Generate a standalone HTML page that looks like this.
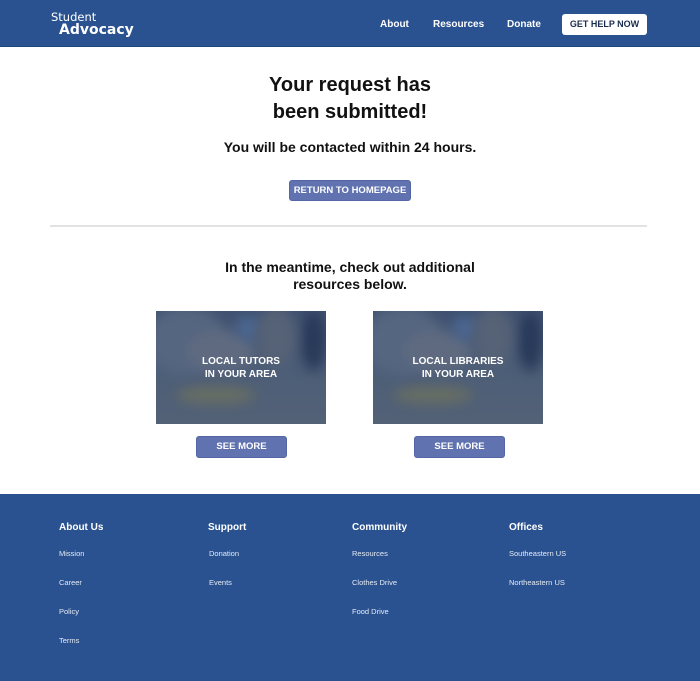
<!DOCTYPE html>
<html><head><meta charset="utf-8"><style>
*{margin:0;padding:0;box-sizing:border-box}
body{width:700px;height:681px;position:relative;background:#fff;font-family:"Liberation Sans",Arial,sans-serif;overflow:hidden}
.a{position:absolute}
.hdr{left:0;top:0;width:700px;height:47px;background:#2a5290;border-bottom:1px solid #21457d}
.nav{color:#fff;font-size:10px;font-weight:bold;top:19px}
.c{text-align:center;width:700px;left:0;color:#111;font-weight:bold}
.btn{background:#6072b0;color:#fff;font-weight:bold;font-size:9.5px;text-align:center;border-radius:3px;border:1px solid #5466a5}
.img{width:170px;height:113px;overflow:hidden;background:linear-gradient(180deg,#4c5f7e 0%,#5f7088 45%,#6a7886 100%)}
.img .b{position:absolute;filter:blur(6px);border-radius:50%}
.img .o{position:absolute;left:0;top:0;width:100%;height:100%;background:rgba(40,58,90,0.35)}
.img .t{position:absolute;left:0;width:100%;top:44px;text-align:center;color:#fff;font-weight:bold;font-size:10px;line-height:13px}
.ft{left:0;top:494px;width:700px;height:187px;background:#2a5290}
.fh{color:#fff;font-weight:bold;font-size:10px;top:522px}
.fl{color:#e6ebf4;font-size:7.5px}
</style></head><body>
<div class="a hdr"></div>
<div class="a" style="left:51px;top:11px;color:#fff;font-family:'DejaVu Sans',sans-serif;font-size:11.5px;line-height:13px">Student</div>
<div class="a" style="left:59px;top:22px;color:#fff;font-family:'DejaVu Sans',sans-serif;font-weight:bold;font-size:14px;line-height:16px">Advocacy</div>
<div class="a nav" style="left:380px">About</div>
<div class="a nav" style="left:433px">Resources</div>
<div class="a nav" style="left:507px">Donate</div>
<div class="a" style="left:562px;top:14px;width:85px;height:21px;background:#fff;border-radius:3px;color:#1c2d4f;font-size:9px;font-weight:bold;text-align:center;line-height:21px">GET HELP NOW</div>

<div class="a c" style="top:72px;font-size:20px;line-height:27px">Your request has<br>been submitted!</div>
<div class="a c" style="top:139px;font-size:14px">You will be contacted within 24 hours.</div>
<div class="a btn" style="left:289px;top:180px;width:122px;height:21px;line-height:19px">RETURN TO HOMEPAGE</div>
<div class="a" style="left:50px;top:225px;width:597px;height:2px;background:#e2e2e2"></div>
<div class="a c" style="top:259px;font-size:14px;line-height:17px">In the meantime, check out additional<br>resources below.</div>

<div class="a img" style="left:156px;top:311px">
<div class="b" style="left:-10px;top:-5px;width:80px;height:70px;background:#6e7e96"></div>
<div class="b" style="left:30px;top:20px;width:70px;height:40px;background:#7d8595"></div>
<div class="b" style="left:80px;top:5px;width:25px;height:25px;background:#5e7fb0"></div>
<div class="b" style="left:145px;top:0;width:25px;height:60px;background:#2a3a5a"></div>
<div class="b" style="left:100px;top:-5px;width:40px;height:60px;background:#6f7886"></div>
<div class="b" style="left:20px;top:75px;width:80px;height:18px;background:#8a8a6a"></div>
<div class="o"></div>
<div class="t">LOCAL TUTORS<br>IN YOUR AREA</div></div>
<div class="a img" style="left:373px;top:311px">
<div class="b" style="left:-10px;top:-5px;width:80px;height:70px;background:#6e7e96"></div>
<div class="b" style="left:30px;top:20px;width:70px;height:40px;background:#7d8595"></div>
<div class="b" style="left:80px;top:5px;width:25px;height:25px;background:#5e7fb0"></div>
<div class="b" style="left:145px;top:0;width:25px;height:60px;background:#2a3a5a"></div>
<div class="b" style="left:100px;top:-5px;width:40px;height:60px;background:#6f7886"></div>
<div class="b" style="left:20px;top:75px;width:80px;height:18px;background:#8a8a6a"></div>
<div class="o"></div>
<div class="t">LOCAL LIBRARIES<br>IN YOUR AREA</div></div>
<div class="a btn" style="left:196px;top:436px;width:91px;height:22px;line-height:20px">SEE MORE</div>
<div class="a btn" style="left:414px;top:436px;width:91px;height:22px;line-height:20px">SEE MORE</div>

<div class="a ft"></div>
<div class="a fh" style="left:59px">About Us</div>
<div class="a fh" style="left:208px">Support</div>
<div class="a fh" style="left:352px">Community</div>
<div class="a fh" style="left:509px">Offices</div>
<div class="a fl" style="left:59px;top:549px">Mission</div>
<div class="a fl" style="left:59px;top:578px">Career</div>
<div class="a fl" style="left:59px;top:607px">Policy</div>
<div class="a fl" style="left:59px;top:636px">Terms</div>
<div class="a fl" style="left:209px;top:549px">Donation</div>
<div class="a fl" style="left:209px;top:578px">Events</div>
<div class="a fl" style="left:352px;top:549px">Resources</div>
<div class="a fl" style="left:352px;top:578px">Clothes Drive</div>
<div class="a fl" style="left:352px;top:607px">Food Drive</div>
<div class="a fl" style="left:509px;top:549px">Southeastern US</div>
<div class="a fl" style="left:509px;top:578px">Northeastern US</div>
</body></html>
